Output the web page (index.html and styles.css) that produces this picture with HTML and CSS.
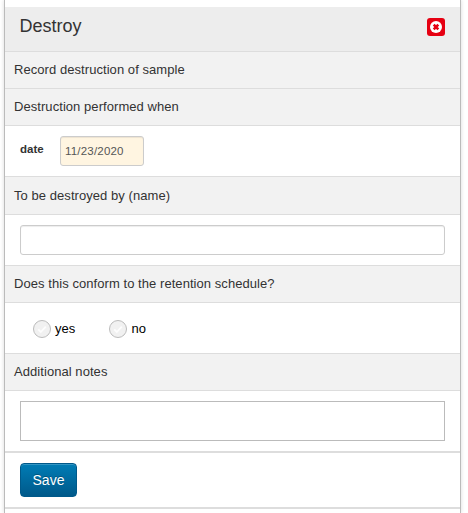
FILE: index.html
```html
<!DOCTYPE html>
<html lang="en">
<head>
<meta charset="utf-8">
<title>Destroy</title>
<link rel="stylesheet" href="styles.css">
</head>
<body>
<form class="panel">
  <header class="panel-header">
    <h1>Destroy</h1>
    <svg class="close" width="18" height="18" viewBox="0 0 18 18" role="img" aria-label="Close">
      <rect width="18" height="18" rx="3" fill="#e60012"/>
      <circle cx="9" cy="9" r="6" fill="#fff"/>
      <path d="M6.7 6.7L11.3 11.3M11.3 6.7L6.7 11.3" stroke="#e60012" stroke-width="2.6"/>
    </svg>
  </header>
  <h2 class="label">Record destruction of sample</h2>
  <h2 class="label">Destruction performed when</h2>
  <div class="row date-row">
    <label for="date">date</label>
    <input id="date" class="field date" type="text" value="11/23/2020">
  </div>
  <h2 class="label label-name">To be destroyed by (name)</h2>
  <div class="row"><input class="field" type="text" aria-label="Name"></div>
  <h2 class="label">Does this conform to the retention schedule?</h2>
  <div class="row choices">
    <label class="choice"><svg width="18" height="18" viewBox="0 0 18 18"><circle cx="9" cy="9" r="8.5" fill="#f1f1f1" stroke="#bbb"/><path d="M5.2 9.4L7.8 12L12.8 6.6" fill="none" stroke="#fdfdfd" stroke-width="1.8"/></svg>yes</label>
    <label class="choice"><svg width="18" height="18" viewBox="0 0 18 18"><circle cx="9" cy="9" r="8.5" fill="#f1f1f1" stroke="#bbb"/><path d="M5.2 9.4L7.8 12L12.8 6.6" fill="none" stroke="#fdfdfd" stroke-width="1.8"/></svg>no</label>
  </div>
  <h2 class="label">Additional notes</h2>
  <div class="row notes-row"><textarea class="notes" aria-label="Additional notes"></textarea></div>
  <div class="row save-row"><button class="save" type="button">Save</button></div>
</form>
</body>
</html>
```
FILE: styles.css
```css
* {
  box-sizing: border-box;
}

body {
  margin: 0;
  height: 513px;
  overflow: hidden;
  background: #fff;
  font-family: "Liberation Sans", Arial, sans-serif;
  font-size: 13px;
  color: #333;
}

.panel {
  width: 457px;
  height: 513px;
  margin-left: 4px;
  padding-top: 7px;
  border: solid #bbb;
  border-width: 0 1px;
  box-shadow: 0 0 4px rgba(0, 0, 0, 0.15);
}

.panel-header {
  display: flex;
  justify-content: space-between;
  align-items: flex-start;
  height: 45px;
  padding: 8px 15px 0 14.5px;
  background: #ededed;
  border-bottom: 1px solid #ddd;
}

h1 {
  margin: 0;
  font-size: 18px;
  font-weight: 400;
  line-height: 22px;
}

.close {
  margin-top: 3px;
}

.label {
  height: 37px;
  margin: 0;
  padding-left: 9px;
  background: #f2f2f2;
  border-bottom: 1px solid #ddd;
  font-size: 13px;
  font-weight: 400;
  letter-spacing: 0.06px;
  line-height: 36px;
}

.label-name {
  height: 38px;
  line-height: 38px;
}

.row {
  height: 51px;
  padding: 10px 15px;
  border-bottom: 1px solid #ddd;
}

.field {
  display: block;
  width: 100%;
  height: 30px;
  padding: 0 4px;
  border: 1px solid #ccc;
  border-radius: 3px;
  box-shadow: inset 0 1px 1px rgba(0, 0, 0, 0.075);
  color: #555;
  font: 11.5px "Liberation Sans", Arial, sans-serif;
  letter-spacing: 0.2px;
}

.date-row {
  display: flex;
}

.date-row label {
  width: 40px;
  font-size: 11.5px;
  font-weight: 700;
  line-height: 26px;
}

.date {
  width: 84px;
  background: #fff5e1;
}

.choices {
  display: flex;
  align-items: center;
  padding: 1px 28px 0;
  color: #000;
}

.choice {
  display: flex;
  align-items: center;
  gap: 4px;
  width: 76px;
}

.choice + .choice {
  gap: 4.5px;
}

.notes-row {
  height: 62px;
  border-bottom-width: 2px;
}

.notes {
  display: block;
  width: 100%;
  height: 40px;
  border: 1px solid #bbb;
  resize: none;
}

.save-row {
  height: 56px;
  border-bottom-width: 2px;
}

.save {
  display: block;
  width: 57px;
  height: 34px;
  padding: 0;
  border: 1px solid #00598a;
  border-radius: 4px;
  background: linear-gradient(#007cb5, #00598a);
  box-shadow: inset 0 1px 0 rgba(255, 255, 255, 0.2);
  color: #fff;
  font: 14px "Liberation Sans", Arial, sans-serif;
  text-shadow: 0 -1px 0 rgba(0, 0, 0, 0.25);
}
```
